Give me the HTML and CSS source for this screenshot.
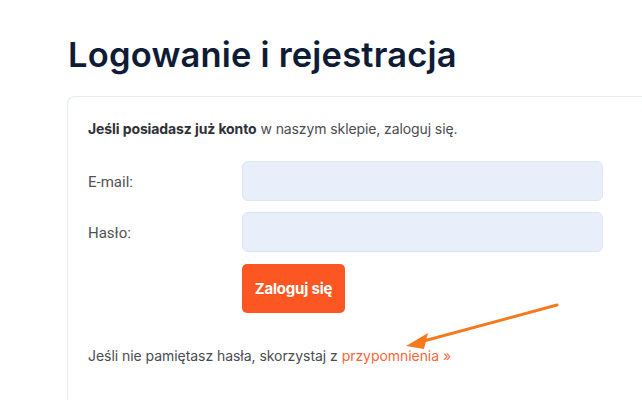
FILE: index.html
```html
<!DOCTYPE html>
<html lang="pl">
<head>
<meta charset="utf-8">
<link rel="stylesheet" href="styles.css">
</head>
<body>
<div class="page">
  <h1 class="title">Logowanie i rejestracja</h1>
  <div class="card">
    <p class="intro"><strong>Jeśli posiadasz już konto</strong> w naszym sklepie, zaloguj się.</p>
    <form class="form">
      <label class="label" for="email">E-mail:</label>
      <input class="input" id="email" type="text">
      <label class="label" for="pass">Hasło:</label>
      <input class="input" id="pass" type="password">
      <div></div>
      <button class="btn" type="button">Zaloguj się</button>
    </form>
    <p class="remind">Jeśli nie pamiętasz hasła, skorzystaj z <a class="link" href="#">przypomnienia »</a></p>
  </div>
</div>
<svg class="arrow" width="642" height="400" viewBox="0 0 642 400">
  <line x1="557" y1="305" x2="420" y2="342" stroke="#f57a1f" stroke-width="3" stroke-linecap="round"/>
  <polygon points="406,346 428,333 424,349" fill="#f57a1f"/>
</svg>
</body>
</html>
```
FILE: styles.css
```css
html, body {
  margin: 0;
  padding: 0;
  background: #fff;
  overflow: hidden;
}
body {
  font-family: "Inter", "Noto Sans", sans-serif;
  color: #3d3f45;
  width: 642px;
  height: 400px;
  position: relative;
}
.page {
  padding: 37px 0 0 67px;
}
.title {
  margin: 0 0 23px 1px;
  font-family: "Inter", sans-serif;
  font-weight: 600;
  font-size: 34.5px;
  line-height: 36px;
  color: #0e1c35;
  letter-spacing: 0.2px;
}
.card {
  width: 575px;
  height: 303px;
  border: 1px solid #e5ebf2;
  border-right: none;
  border-bottom: none;
  border-radius: 8px 0 0 0;
  padding: 22px 0 0 20px;
  box-sizing: border-box;
}
.intro {
  margin: 0;
  font-size: 14px;
  line-height: 20px;
  letter-spacing: -0.1px;
  color: #4a4c52;
}
.intro strong {
  font-weight: 700;
  color: #2f3136;
}
.form {
  display: grid;
  grid-template-columns: 154px 361px;
  row-gap: 11px;
  margin-top: 22px;
  align-items: center;
}
.label {
  font-family: "Roboto", "Liberation Sans", sans-serif;
  font-size: 15px;
  color: #505256;
  padding-top: 2px;
}
.input {
  height: 40px;
  box-sizing: border-box;
  background: #e8effb;
  border: 1px solid #dde5f1;
  border-radius: 6px;
  margin: 0;
}
.btn {
  width: 103px;
  height: 49px;
  margin-top: 1px;
  background: #fc5722;
  color: #fff;
  border: 0;
  border-radius: 5px;
  font-family: "Inter", sans-serif;
  font-weight: 700;
  font-size: 15px;
  letter-spacing: -0.2px;
}
.remind {
  margin: 33px 0 0;
  font-size: 14px;
  line-height: 20px;
  letter-spacing: -0.05px;
  color: #4a4c52;
}
.link {
  color: #f7683a;
  text-decoration: none;
}
.arrow {
  position: absolute;
  left: 0;
  top: 0;
  pointer-events: none;
}
```
